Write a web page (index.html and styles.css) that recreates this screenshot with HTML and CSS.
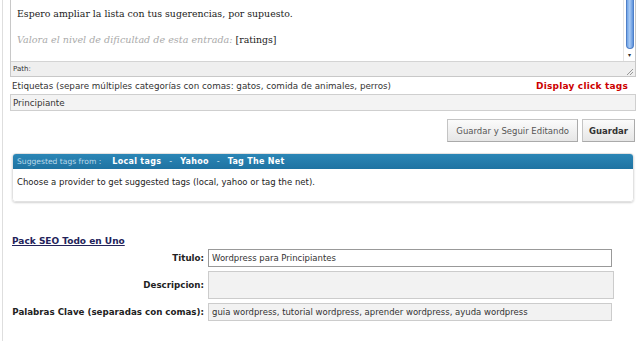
FILE: index.html
```html
<!DOCTYPE html>
<html lang="es">
<head>
    <meta charset="UTF-8">
    <title>Editar entrada</title>
    <link rel="stylesheet" href="styles.css">
</head>
<body>
    <div class="page">
        <div class="editor">
            <div class="editor-body">
                <div class="editor-text">
                    <p>Espero ampliar la lista con tus sugerencias, por supuesto.</p>
                    <p><em>Valora el nivel de dificultad de esta entrada:</em> [ratings]</p>
                </div>
                <div class="scrollbar">
                    <div class="thumb"></div>
                    <div class="arrow">&#9662;</div>
                </div>
            </div>
            <div class="path-bar">
                <span>Path:</span>
                <svg class="grip" width="7" height="7" viewBox="0 0 7 7">
                    <path d="M1 7 L7 1 M4 7 L7 4" stroke="#999" stroke-width="1"/>
                </svg>
            </div>
        </div>

        <div class="tags-row">
            <label for="tags">Etiquetas (separe múltiples categorías con comas: gatos, comida de animales, perros)</label>
            <a class="click-tags" href="#">Display click tags</a>
        </div>
        <input type="text" id="tags" class="tags-input" value="Principiante">

        <div class="actions">
            <button class="btn">Guardar y Seguir Editando</button>
            <button class="btn btn-primary">Guardar</button>
        </div>

        <div class="suggest">
            <div class="suggest-head">
                <span class="from">Suggested tags from :</span>
                <a href="#">Local tags</a>
                <span class="sep">-</span>
                <a href="#">Yahoo</a>
                <span class="sep">-</span>
                <a href="#">Tag The Net</a>
            </div>
            <div class="suggest-body">Choose a provider to get suggested tags (local, yahoo or tag the net).</div>
        </div>

        <div class="seo">
            <a class="seo-title" href="#">Pack SEO Todo en Uno</a>
            <div class="seo-form">
                <label for="seo-title">Titulo:</label>
                <input type="text" id="seo-title" class="field field-white" value="Wordpress para Principiantes">
                <label for="seo-desc">Descripcion:</label>
                <textarea id="seo-desc" class="field field-area"></textarea>
                <label for="seo-keys">Palabras Clave (separadas con comas):</label>
                <input type="text" id="seo-keys" class="field" value="guia wordpress, tutorial wordpress, aprender wordpress, ayuda wordpress">
            </div>
        </div>
    </div>
</body>
</html>
```

FILE: styles.css
```css
body {
    margin: 0;
    font-family: "DejaVu Sans", Verdana, sans-serif;
    font-size: 8.75px;
    color: #333;
    background: #fff;
}
.page {
    margin-left: 2px;
    border-left: 1px solid #dedede;
    padding: 0 4px 20px 7px;
    min-height: 341px;
    box-sizing: border-box;
}
.editor {
    border: 1px solid #c8c8c8;
    border-top: none;
}
.editor-body {
    display: flex;
    height: 61px;
}
.editor-text {
    flex: 1;
    padding: 8px 6px 0 6px;
    font-family: "DejaVu Serif", Georgia, serif;
    font-size: 9.4px;
    color: #222;
}
.editor-text p {
    margin: 0 0 15px;
}
.editor-text em {
    color: #aaa;
    font-size: 9.6px;
}
.scrollbar {
    width: 11px;
    display: flex;
    flex-direction: column;
    align-items: center;
    border-left: 1px solid #e6e6e6;
}
.thumb {
    width: 8px;
    height: 49px;
    border-radius: 0 0 5px 5px;
    background: linear-gradient(to right, #6fa3e6, #a9cbf5 45%, #5d92dc);
    border: 1px solid #4f7fc7;
    border-top: none;
    box-sizing: border-box;
}
.arrow {
    font-size: 6px;
    color: #333;
    margin-top: 2px;
}
.path-bar {
    display: flex;
    justify-content: space-between;
    align-items: center;
    height: 14px;
    background: #efefef;
    border-top: 1px solid #d4d4d4;
    padding: 0 2px;
    font-size: 7px;
    color: #333;
}
.grip {
    align-self: flex-end;
    margin-bottom: 1px;
}
.tags-row {
    display: flex;
    justify-content: space-between;
    align-items: center;
    height: 17px;
    padding: 0 8px 0 2px;
}
.click-tags {
    color: #c00;
    font-weight: bold;
    text-decoration: none;
    font-size: 9px;
    letter-spacing: 0.2px;
}
.tags-input {
    display: block;
    width: 100%;
    height: 17px;
    box-sizing: border-box;
    margin: 0;
    padding: 0 2px;
    border: 1px solid #cfcfcf;
    background: #f3f3f3;
    font-family: inherit;
    font-size: 8.75px;
    color: #333;
}
.actions {
    display: flex;
    justify-content: flex-end;
    gap: 4px;
    margin-top: 8px;
    padding-right: 1px;
}
.btn {
    height: 23px;
    padding: 0 8px;
    font-family: inherit;
    font-size: 8.5px;
    color: #555;
    background: linear-gradient(#fbfbfb, #e6e6e6);
    border: 1px solid #c4c4c4;
    border-bottom-color: #aaa;
    border-right-color: #aaa;
}
.btn-primary {
    font-weight: bold;
    color: #333;
    padding: 0 6px;
}
.suggest {
    margin: 11px 2px 0 2px;
    border-radius: 4px;
    box-shadow: 0 1px 2px rgba(0, 0, 0, 0.18);
    border: 1px solid #e2e2e2;
    overflow: hidden;
}
.suggest-head {
    display: flex;
    align-items: center;
    height: 15px;
    padding: 0 4px;
    background: linear-gradient(#2b86b6, #1f73a2);
    color: #b9d8ea;
    font-size: 7.6px;
}
.suggest-head .from {
    margin-right: 11px;
}
.suggest-head a {
    color: #fff;
    font-weight: bold;
    text-decoration: none;
    font-size: 8px;
    letter-spacing: 0.3px;
}
.suggest-head .sep {
    margin: 0 8px;
    color: #d8e8f2;
    font-size: 8px;
}
.suggest-body {
    height: 32px;
    padding: 8px 4px 0;
    box-sizing: border-box;
    background: #fff;
    color: #222;
    font-size: 8.5px;
}
.seo {
    margin-top: 34px;
    padding-left: 2px;
}
.seo-title {
    color: #23235a;
    font-weight: bold;
    text-decoration: underline;
    font-size: 9px;
}
.seo-form {
    display: grid;
    grid-template-columns: 192px 404px;
    column-gap: 4px;
    row-gap: 4px;
    align-items: center;
    margin-top: 3px;
}
.seo-form label {
    text-align: right;
    font-weight: bold;
    color: #222;
    font-size: 8.7px;
    white-space: nowrap;
}
.field {
    height: 18px;
    box-sizing: border-box;
    margin: 0;
    padding: 0 3px;
    border: 1px solid #ccc;
    background: #f2f2f2;
    font-family: inherit;
    font-size: 8.5px;
    color: #333;
}
.field-white {
    background: #fff;
    border-color: #999;
}
.field-area {
    height: 28px;
    width: 406px;
    resize: none;
}
```
